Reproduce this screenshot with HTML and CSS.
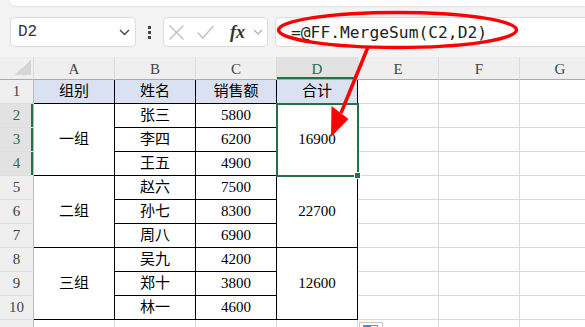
FILE: index.html
```html
<!DOCTYPE html>
<html lang="zh-CN">
<head>
  <meta charset="UTF-8">
  <meta name="viewport" content="width=device-width, initial-scale=1.0">
  <title>MergeSum</title>
  <link rel="stylesheet" href="styles.css">
</head>
<body>
  <div class="topbar"></div>

  <div class="toolbar">
    <div class="namebox">
      <span class="cellref">D2</span>
      <svg class="chev" width="11" height="7" viewBox="0 0 11 7"><path d="M1 1l4.5 4.5L10 1" fill="none" stroke="#444" stroke-width="1.4"/></svg>
    </div>
    <div class="dots"><i></i><i></i><i></i></div>
    <div class="fnbox">
      <svg class="cancel" width="17" height="15" viewBox="0 0 17 15"><path d="M1.5 0.5l14 14M15.5 0.5l-14 14" stroke="#bdbdbd" stroke-width="1.3"/></svg>
      <svg class="ok" width="17" height="14" viewBox="0 0 17 14"><path d="M0.8 7.5l5 5.5L16.3 1" fill="none" stroke="#bdbdbd" stroke-width="1.3"/></svg>
      <span class="fx">fx</span>
      <svg class="chev" width="10" height="6" viewBox="0 0 10 6"><path d="M1 1l4 4 4-4" fill="none" stroke="#aaa" stroke-width="1.2"/></svg>
    </div>
    <div class="formula">=@FF.MergeSum(C2,D2)</div>
  </div>

  <div class="sheet">
    <!-- column headers -->
    <div class="c ch corner"></div>
    <div class="c ch">A</div>
    <div class="c ch">B</div>
    <div class="c ch">C</div>
    <div class="c ch on">D</div>
    <div class="c ch">E</div>
    <div class="c ch">F</div>
    <div class="c ch">G</div>

    <!-- row 1 -->
    <div class="c rh">1</div>
    <div class="c t hd">组别</div>
    <div class="c t hd">姓名</div>
    <div class="c t hd">销售额</div>
    <div class="c t hd">合计</div>
    <div class="c"></div>
    <div class="c"></div>
    <div class="c"></div>

    <!-- group 1 -->
    <div class="c rh on">2</div>
    <div class="c t m3">一组</div>
    <div class="c t">张三</div>
    <div class="c t">5800</div>
    <div class="c t m3 sel">16900</div>
    <div class="c"></div>
    <div class="c"></div>
    <div class="c"></div>

    <div class="c rh on">3</div>
    <div class="c t">李四</div>
    <div class="c t">6200</div>
    <div class="c"></div>
    <div class="c"></div>
    <div class="c"></div>

    <div class="c rh on">4</div>
    <div class="c t">王五</div>
    <div class="c t">4900</div>
    <div class="c"></div>
    <div class="c"></div>
    <div class="c"></div>

    <!-- group 2 -->
    <div class="c rh">5</div>
    <div class="c t m3">二组</div>
    <div class="c t">赵六</div>
    <div class="c t">7500</div>
    <div class="c t m3">22700</div>
    <div class="c"></div>
    <div class="c"></div>
    <div class="c"></div>

    <div class="c rh">6</div>
    <div class="c t">孙七</div>
    <div class="c t">8300</div>
    <div class="c"></div>
    <div class="c"></div>
    <div class="c"></div>

    <div class="c rh">7</div>
    <div class="c t">周八</div>
    <div class="c t">6900</div>
    <div class="c"></div>
    <div class="c"></div>
    <div class="c"></div>

    <!-- group 3 -->
    <div class="c rh">8</div>
    <div class="c t m3">三组</div>
    <div class="c t">吴九</div>
    <div class="c t">4200</div>
    <div class="c t m3">12600</div>
    <div class="c"></div>
    <div class="c"></div>
    <div class="c"></div>

    <div class="c rh">9</div>
    <div class="c t">郑十</div>
    <div class="c t">3800</div>
    <div class="c"></div>
    <div class="c"></div>
    <div class="c"></div>

    <div class="c rh">10</div>
    <div class="c t">林一</div>
    <div class="c t">4600</div>
    <div class="c"></div>
    <div class="c"></div>
    <div class="c"></div>

    <!-- row 11, cut off by the window -->
    <div class="c rh"></div>
    <div class="c"></div>
    <div class="c"></div>
    <div class="c"></div>
    <div class="c"></div>
    <div class="c"></div>
    <div class="c"></div>
    <div class="c"></div>
  </div>

  <!-- red annotation on top of the screenshot -->
  <svg class="mark" width="585" height="327" viewBox="0 0 585 327">
    <ellipse cx="397.5" cy="30" rx="119" ry="17.5" fill="none" stroke="#f00" stroke-width="3.5"/>
    <path d="M368 47L341 113" stroke="#f00" stroke-width="3.5"/>
    <polygon points="331,137 331.5,106 348.5,119" fill="#f00"/>
  </svg>

  <div class="paste"><i></i></div>
</body>
</html>
```

FILE: styles.css
```css
body {
  margin: 0;
  width: 585px;
  height: 327px;
  overflow: hidden;
  position: relative;
  background: #f3f3f3;
  font-family: "Liberation Serif", "Noto Sans CJK SC", serif;
}

.topbar {
  height: 6px;
  margin-left: 10px;
  background: #fff;
  border-bottom-left-radius: 7px;
  box-shadow: 0 1px 2px rgba(0, 0, 0, 0.08);
}

.toolbar {
  display: flex;
  align-items: center;
  height: 30px;
  margin: 11px 0 0 10px;
}

.namebox,
.fnbox,
.formula {
  height: 30px;
  box-sizing: border-box;
  background: #fff;
  border: 1px solid #dcdcdc;
  border-radius: 5px;
  display: flex;
  align-items: center;
}

.namebox {
  width: 126px;
  padding: 0 5px 0 7px;
  justify-content: space-between;
}

.cellref {
  font: 16px "Liberation Mono", monospace;
  color: #333;
}

.dots {
  width: 27px;
  display: flex;
  flex-direction: column;
  align-items: center;
  gap: 2px;
}

.dots i {
  width: 3px;
  height: 3px;
  background: #444;
}

.fnbox {
  width: 105px;
  padding-left: 4px;
}

.fnbox .ok {
  margin-left: 12px;
}

.fx {
  margin-left: 16px;
  font: italic bold 18px "Liberation Serif", serif;
  color: #333;
}

.fnbox .chev {
  margin-left: 8px;
}

.formula {
  flex: 1;
  margin: 0 -10px 0 7px;
  padding-left: 15px;
  font: 16.3px "DejaVu Sans Mono", monospace;
  color: #222;
}

.sheet {
  margin-top: 10px;
  height: 270px;
  overflow: hidden;
  display: grid;
  grid-template-columns: 34px repeat(7, 81px);
  grid-template-rows: 23px repeat(11, 24px);
  background: #fff;
}

.c {
  box-sizing: border-box;
  border-right: 1px solid #dadada;
  border-bottom: 1px solid #dadada;
  display: flex;
  align-items: center;
  justify-content: center;
  font-size: 15px;
  line-height: 1;
  color: #000;
}

.ch {
  background: #efefef;
  border-right-color: #dcdcdc;
  border-bottom-color: #ababab;
  color: #444;
  padding-top: 2px;
}

.corner {
  background: #efefef linear-gradient(to top left, #d6d6d6 50%, transparent 50%) no-repeat right 2px bottom 4px / 17px 15px;
}

.rh {
  background: #efefef;
  border-right-color: #bcbcbc;
  border-bottom-color: #dcdcdc;
  color: #444;
}

.on {
  background: #e2e2e2;
  color: #217346;
}

.rh.on {
  box-shadow: inset -2px 0 #217346;
}

.ch.on {
  box-shadow: inset 0 -2px #217346;
}

.t {
  border-color: #000;
}

.hd {
  background: #d9e1f2;
}

.m3 {
  grid-row: span 3;
}

.sel {
  position: relative;
  outline: 2px solid #217346;
  outline-offset: -1px;
}

.sel::after {
  content: "";
  position: absolute;
  right: -4px;
  bottom: -4px;
  width: 5px;
  height: 5px;
  background: #217346;
  border: 1px solid #fff;
}

.mark {
  position: absolute;
  left: 0;
  top: 0;
  pointer-events: none;
}

.paste {
  position: absolute;
  left: 359px;
  top: 322px;
  width: 24px;
  height: 10px;
  box-sizing: border-box;
  border: 1px solid #c8c8c8;
  background: #fff;
}

.paste i {
  display: block;
  margin: 2px 0 0 3px;
  width: 15px;
  height: 8px;
  box-sizing: border-box;
  border: 1px solid #888;
  background: linear-gradient(to right, #3b7ddd 55%, #fff 55%);
}
```
